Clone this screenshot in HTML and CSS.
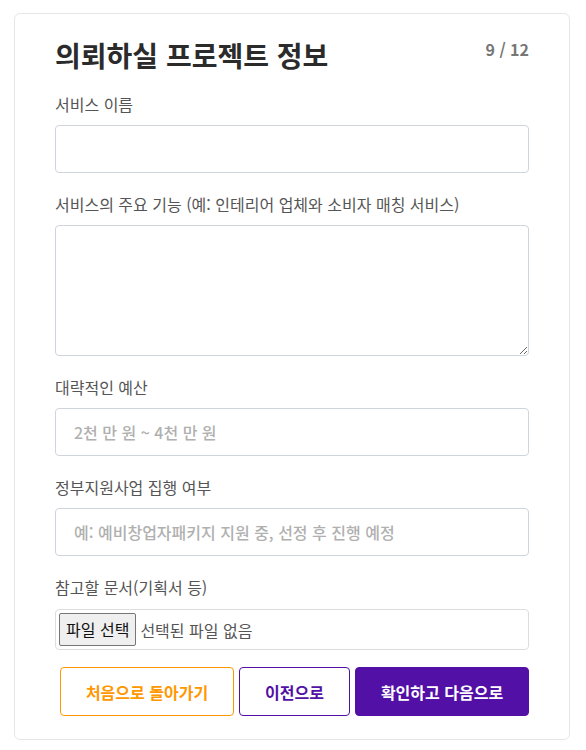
FILE: index.html
```html
<!DOCTYPE html>
<html lang="ko">
<head>
	<title>의뢰하실 프로젝트 정보</title>
	<meta charset="utf-8">
	<link rel="stylesheet" href="styles.css">
</head>
<body>
	<section class="card">
		<div class="head">
			<h2>의뢰하실 프로젝트 정보</h2>
			<span class="step">9 / 12</span>
		</div>
		<div class="field">
			<label>서비스 이름</label>
			<input type="text">
		</div>
		<div class="field">
			<label>서비스의 주요 기능 (예: 인테리어 업체와 소비자 매칭 서비스)</label>
			<textarea></textarea>
		</div>
		<div class="field">
			<label>대략적인 예산</label>
			<input type="text" placeholder="2천 만 원 ~ 4천 만 원">
		</div>
		<div class="field">
			<label>정부지원사업 집행 여부</label>
			<input type="text" placeholder="예: 예비창업자패키지 지원 중, 선정 후 진행 예정">
		</div>
		<div class="field">
			<label>참고할 문서(기획서 등)</label>
			<div class="file">
				<span class="file-btn">파일 선택</span>
				<span class="file-name">선택된 파일 없음</span>
			</div>
		</div>
		<div class="buttons">
			<button class="btn-home">처음으로 돌아가기</button>
			<button class="btn-prev">이전으로</button>
			<button class="btn-next">확인하고 다음으로</button>
		</div>
	</section>
</body>
</html>
```

FILE: styles.css
```css
:root{
	--purple: #5210a6;
	--orange: #ff9800;
	--line: #d0d4dc;
}
*{
	margin: 0;
	padding: 0;
	box-sizing: border-box;
}
body{
	background: #fff;
	padding: 13px 16px 0 14px;
	font-family: "Noto Sans CJK KR", "Noto Sans", sans-serif;
	color: #333;
}
.card{
	border: 1px solid #e6e6e6;
	border-radius: 6px;
	padding: 23px 40px 23px 40px;
}
.head{
	display: flex;
	justify-content: space-between;
	align-items: flex-start;
	margin-bottom: 20px;
}
h2{
	font-size: 28px;
	line-height: 36px;
	font-weight: 700;
	color: #2b2b2b;
}
.step{
	font-size: 16px;
	font-weight: 700;
	color: #777;
	line-height: 24px;
}
.field{
	display: flex;
	flex-direction: column;
	margin-bottom: 20px;
}
.field label{
	font-size: 16px;
	line-height: 22px;
	color: #555;
	margin-bottom: 10px;
}
input, textarea{
	width: 100%;
	border: 1px solid var(--line);
	border-radius: 4px;
	font-family: inherit;
	font-size: 16px;
	padding: 0 18px;
	color: #333;
}
input{
	height: 48px;
}
textarea{
	height: 131px;
	padding: 10px 18px;
	display: block;
}
input::placeholder{
	color: #b0b0b0;
	font-weight: 500;
}
.file{
	height: 41px;
	border: 1px solid #ddd;
	border-radius: 4px;
	display: flex;
	align-items: center;
	padding: 0 3px;
	margin-top: 1px;
	margin-bottom: -3px;
}
.file-btn{
	font-size: 16px;
	color: #111;
	background: #efefef;
	border: 1px solid #767676;
	border-radius: 2px;
	padding: 0 6px;
	height: 33px;
	line-height: 31px;
}
.file-name{
	font-size: 16px;
	color: #555;
	margin-left: 4px;
}
.buttons{
	display: flex;
	gap: 5px;
	padding-left: 5px;
}
.buttons button{
	height: 49px;
	border-radius: 4px;
	font-family: inherit;
	font-size: 16px;
	font-weight: 700;
	background: #fff;
}
.btn-home{
	width: 174px;
	border: 1px solid var(--orange);
	color: var(--orange);
}
.btn-prev{
	width: 111px;
	border: 1px solid var(--purple);
	color: var(--purple);
}
.buttons .btn-next{
	width: 174px;
	border: 1px solid var(--purple);
	background: var(--purple);
	color: #fff;
}
```
